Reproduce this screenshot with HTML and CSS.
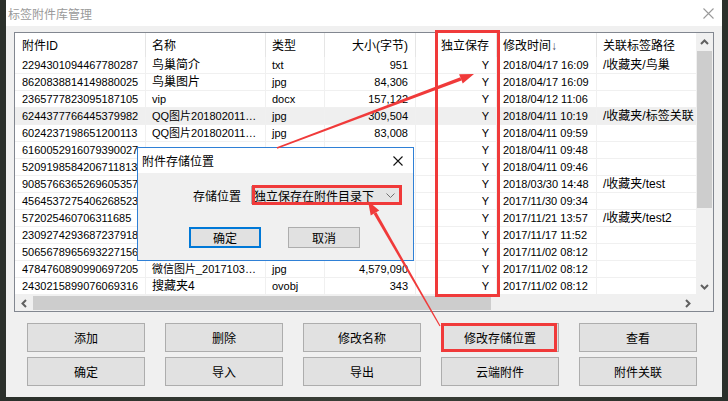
FILE: index.html
```html
<!DOCTYPE html>
<html lang="zh-CN">
<head>
    <meta charset="UTF-8">
    <title>标签附件库管理</title>
    <link rel="stylesheet" href="styles.css">
</head>
<body>

    <div class="window">
        <div class="titlebar">
            <span>标签附件库管理</span>
            <svg class="close" width="11" height="11" viewBox="0 0 11 11"><path d="M0.5 0.5 L10.5 10.5 M10.5 0.5 L0.5 10.5" stroke="#9a9a9a" stroke-width="1.1"/></svg>
        </div>

        <div class="list">
            <div class="grid-area">
                <table class="grid">
                    <colgroup>
                        <col style="width:131px"><col style="width:120px"><col style="width:59px"><col style="width:91px">
                        <col style="width:81px"><col style="width:100px"><col style="width:100px">
                    </colgroup>
                    <thead>
                        <tr>
                            <th class="first">附件ID</th>
                            <th>名称</th>
                            <th>类型</th>
                            <th class="num">大小(字节)</th>
                            <th class="num">独立保存</th>
                            <th>修改时间<span class="sort">↓</span></th>
                            <th>关联标签路径</th>
                        </tr>
                    </thead>
                    <tbody>
                        <tr><td class="first">2294301094467780287</td><td class="cn">鸟巢简介</td><td>txt</td><td class="num">951</td><td class="num">Y</td><td>2018/04/17 16:09</td><td class="cn">/收藏夹/鸟巢</td></tr>
                        <tr><td class="first">8620838814149880025</td><td class="cn">鸟巢图片</td><td>jpg</td><td class="num">84,306</td><td class="num">Y</td><td>2018/04/17 16:09</td><td></td></tr>
                        <tr><td class="first">2365777823095187105</td><td>vip</td><td>docx</td><td class="num">157,122</td><td class="num">Y</td><td>2018/04/12 11:06</td><td></td></tr>
                        <tr class="selected"><td class="first">6244377766445379982</td><td>QQ图片201802011…</td><td>jpg</td><td class="num">309,504</td><td class="num">Y</td><td>2018/04/11 10:19</td><td class="cn">/收藏夹/标签关联</td></tr>
                        <tr><td class="first">6024237198651200113</td><td>QQ图片201802011…</td><td>jpg</td><td class="num">83,008</td><td class="num">Y</td><td>2018/04/11 09:59</td><td></td></tr>
                        <tr><td class="first">6160052916079390027</td><td></td><td></td><td class="num"></td><td class="num">Y</td><td>2018/04/11 09:48</td><td></td></tr>
                        <tr><td class="first">5209198584206711813</td><td></td><td></td><td class="num"></td><td class="num">Y</td><td>2018/04/11 09:46</td><td></td></tr>
                        <tr><td class="first">9085766365269605357</td><td></td><td></td><td class="num"></td><td class="num">Y</td><td>2018/03/30 14:48</td><td class="cn">/收藏夹/test</td></tr>
                        <tr><td class="first">4564537275406268523</td><td></td><td></td><td class="num"></td><td class="num">Y</td><td>2017/11/30 09:34</td><td></td></tr>
                        <tr><td class="first">572025460706311685</td><td></td><td></td><td class="num"></td><td class="num">Y</td><td>2017/11/21 13:57</td><td class="cn">/收藏夹/test2</td></tr>
                        <tr><td class="first">2309274293687237918</td><td></td><td></td><td class="num"></td><td class="num">Y</td><td>2017/11/17 11:52</td><td></td></tr>
                        <tr><td class="first">5065678965693227156</td><td></td><td></td><td class="num"></td><td class="num">Y</td><td>2017/11/02 08:12</td><td></td></tr>
                        <tr><td class="first">4784760890990697205</td><td>微信图片_2017103…</td><td>jpg</td><td class="num">4,579,090</td><td class="num">Y</td><td>2017/11/02 08:12</td><td></td></tr>
                        <tr><td class="first">2430215899076069316</td><td class="cn">搜藏夹4</td><td>ovobj</td><td class="num">343</td><td class="num">Y</td><td>2017/11/02 08:12</td><td></td></tr>
                    </tbody>
                </table>
            </div>
            <div class="vscroll">
                <div class="arrow"><svg width="9" height="6" viewBox="0 0 9 6"><polyline points="1,5 4.5,1.5 8,5" fill="none" stroke="#606060" stroke-width="2"/></svg></div>
                <div class="vthumb"></div>
                <div class="spacer"></div>
                <div class="arrow"><svg width="9" height="6" viewBox="0 0 9 6"><polyline points="1,1 4.5,4.5 8,1" fill="none" stroke="#606060" stroke-width="2"/></svg></div>
            </div>
            <div class="hscroll">
                <div class="arrow"><svg width="6" height="9" viewBox="0 0 6 9"><polyline points="5,1 1.5,4.5 5,8" fill="none" stroke="#606060" stroke-width="2"/></svg></div>
                <div class="hthumb"></div>
                <div class="spacer"></div>
                <div class="arrow"><svg width="6" height="9" viewBox="0 0 6 9"><polyline points="1,1 4.5,4.5 1,8" fill="none" stroke="#606060" stroke-width="2"/></svg></div>
            </div>
            <div class="corner"></div>
        </div>

        <div class="actions">
            <button class="btn">添加</button>
            <button class="btn">删除</button>
            <button class="btn">修改名称</button>
            <button class="btn">修改存储位置</button>
            <button class="btn">查看</button>
            <button class="btn">确定</button>
            <button class="btn">导入</button>
            <button class="btn">导出</button>
            <button class="btn">云端附件</button>
            <button class="btn">附件关联</button>
        </div>
    </div>

    <!-- 弹出的对话框 -->
    <div class="dialog">
        <div class="dlg-title">
            <span>附件存储位置</span>
            <svg width="10" height="10" viewBox="0 0 10 10"><path d="M0.5 0.5 L9.5 9.5 M9.5 0.5 L0.5 9.5" stroke="#111" stroke-width="1.1"/></svg>
        </div>
        <div class="dlg-body">
            <div class="field">
                <label>存储位置</label>
                <div class="combo">
                    <span>独立保存在附件目录下</span>
                    <svg width="9" height="5" viewBox="0 0 9 5"><polyline points="0.5,0.5 4.5,4.5 8.5,0.5" fill="none" stroke="#707070" stroke-width="1"/></svg>
                </div>
            </div>
            <div class="dlg-buttons">
                <button class="btn default">确定</button>
                <button class="btn">取消</button>
            </div>
        </div>
    </div>

    <!-- 红色标注 -->
    <svg class="marks" width="728" height="401" viewBox="0 0 728 401">
        <g fill="none" stroke="#f03a3a" stroke-width="3">
            <rect x="436.5" y="31.5" width="62" height="264"/>
            <rect x="253.5" y="186.5" width="147" height="17"/>
            <rect x="442.5" y="324.5" width="113" height="26"/>
        </g>
        <g fill="#f03a3a">
            <polygon points="277.3,148.8 461.5,80.6 460.3,77.2 276.7,147.2"/>
            <polygon points="474,74 462.7,83.6 459.1,74.2"/>
            <polygon points="440.5,325.7 376.4,212.2 373.6,213.8 439.5,326.3"/>
            <polygon points="368,201 379.3,210.6 370.7,215.6"/>
        </g>
    </svg>

</body>
</html>
```

FILE: styles.css
```css
body {
    margin: 0;
    width: 728px;
    height: 401px;
    position: relative;
    overflow: hidden;
    background: linear-gradient(90deg, #2b302b, #3a3f37 50%, #2b302b);
    font-family: "Liberation Sans", "Noto Sans CJK SC", sans-serif;
    color: #000;
}
.window {
    margin-left: 6px;
    width: 716px;
    height: 397px;
    background-color: #f0f0f0;
}
.titlebar {
    height: 26px;
    background-color: #fff;
    display: flex;
    align-items: center;
    justify-content: space-between;
    padding: 0 8px 0 2px;
    color: #9a9a9a;
    font-size: 12px;
}
.list {
    margin: 6px 0 0 8px;
    width: 698px;
    height: 278px;
    border: 1px solid #828790;
    background-color: #fff;
    display: grid;
    grid-template-columns: 681px 17px;
    grid-template-rows: 262px 16px;
}
.grid-area {
    overflow: hidden;
}
.grid {
    table-layout: fixed;
    width: 682px;
    border-collapse: separate;
    border-spacing: 0;
    font-size: 11px;
}
.grid th {
    height: 24px;
    padding: 0 6px 2px;
    font-size: 12px;
    font-weight: normal;
    text-align: left;
    border-right: 1px solid #e5e5e5;
    white-space: nowrap;
    overflow: hidden;
    box-sizing: border-box;
}
.grid td {
    height: 17px;
    padding: 0 6px;
    line-height: 16px;
    border-right: 1px solid #f0f0f0;
    border-bottom: 1px solid #f0f0f0;
    white-space: nowrap;
    overflow: hidden;
    box-sizing: border-box;
}
.grid td.cn {
    font-size: 12px;
}
.grid .first {
    padding-left: 7px;
}
.grid .num {
    text-align: right;
    padding-right: 7px;
}
.grid tr.selected td {
    background-color: #efefef;
}
.sort {
    font-size: 12px;
    color: #4a5068;
}
.vscroll {
    grid-row: 1;
    grid-column: 2;
    background-color: #f0f0f0;
    display: flex;
    flex-direction: column;
}
.vscroll .arrow {
    height: 17px;
    display: flex;
    align-items: center;
    justify-content: center;
}
.vthumb {
    margin: 1px 1px 0;
    height: 157px;
    background-color: #cdcdcd;
}
.spacer {
    flex: 1;
}
.hscroll {
    grid-row: 2;
    grid-column: 1;
    background-color: #f0f0f0;
    display: flex;
}
.hscroll .arrow {
    width: 17px;
    display: flex;
    align-items: center;
    justify-content: center;
}
.hthumb {
    margin: 1px 0 1px 1px;
    width: 458px;
    background-color: #cdcdcd;
}
.corner {
    background-color: #f0f0f0;
}
.actions {
    display: grid;
    grid-template-columns: repeat(5, 118px);
    grid-auto-rows: 29px;
    column-gap: 20px;
    row-gap: 5px;
    margin: 11px 0 0 21px;
}
.btn {
    background-color: #e1e1e1;
    border: 1px solid #adadad;
    font-family: "Liberation Sans", "Noto Sans CJK SC", sans-serif;
    font-size: 12px;
    color: #000;
    padding: 0;
    margin: 0;
}
.dialog {
    position: absolute;
    left: 137px;
    top: 147px;
    width: 275px;
    height: 112px;
    border: 1px solid #2f80d6;
    background-color: #f0f0f0;
    font-size: 12px;
}
.dlg-title {
    height: 25px;
    background-color: #fff;
    display: flex;
    align-items: center;
    justify-content: space-between;
    padding: 0 10px 0 4px;
}
.field {
    display: flex;
    justify-content: flex-end;
    align-items: center;
    gap: 10px;
    margin-top: 13px;
    padding-right: 12px;
}
.combo {
    height: 16px;
    background-color: #e5e5e5;
    border: 1px solid #adadad;
    display: flex;
    align-items: center;
    justify-content: space-between;
    padding: 0 5px 0 2px;
    width: 141px;
}
.dlg-buttons {
    display: flex;
    gap: 27px;
    margin-top: 23px;
    padding-left: 51px;
}
.dlg-buttons .btn {
    width: 72px;
    height: 21px;
}
.dlg-buttons .btn.default {
    border: 2px solid #0078d7;
}
.marks {
    position: absolute;
    left: 0;
    top: 0;
    pointer-events: none;
}
```
